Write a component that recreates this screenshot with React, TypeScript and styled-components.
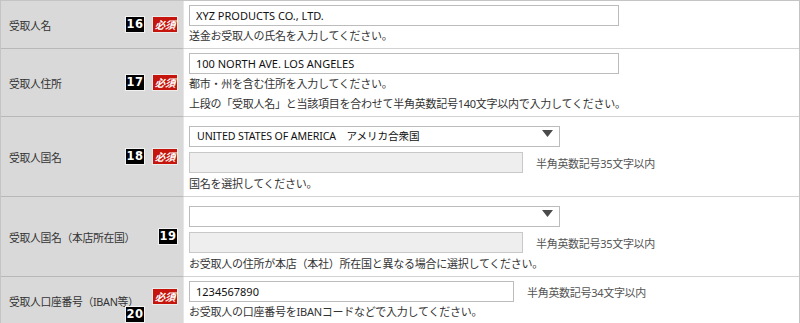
import React from "react";
import styled, { createGlobalStyle } from "styled-components";

const GlobalStyle = createGlobalStyle`
  html, body {
    margin: 0;
    padding: 0;
    background: #ffffff;
  }
  body {
    font-family: "Noto Sans", "Noto Sans CJK JP", sans-serif;
    color: #333333;
  }
`;

const font = `"Noto Sans", "Noto Sans CJK JP", sans-serif`;

const Table = styled.div`
  width: 800px;
  box-sizing: border-box;
  border: 1px solid #c4c4c4;
  border-bottom: none;
`;

const Row = styled.div`
  display: grid;
  grid-template-columns: 183px 1fr;
`;

const LabelCell = styled.div`
  display: flex;
  align-items: center;
  min-width: 0;
  background: #d9d9d9;
  border-bottom: 1px solid #b8b8b8;
  border-right: 1px solid #e6e6e6;
  padding: 0 5px 0 8px;
  font-size: 10.8px;
  color: #333333;
`;

const LabelText = styled.span`
  flex: 1;
  min-width: 0;
  white-space: nowrap;
  letter-spacing: -0.3px;
`;

const Badges = styled.div<{ $stacked?: boolean }>`
  flex: none;
  display: grid;
  grid-template-columns: 20px 26px;
  column-gap: 7px;
  row-gap: 1px;
  align-items: center;
  padding-top: ${(p) => (p.$stacked ? "10px" : "0")};
`;

const Num = styled.span<{ $col?: number; $row?: number }>`
  grid-column: ${(p) => p.$col ?? 1};
  grid-row: ${(p) => p.$row ?? 1};
  justify-self: end;
  box-sizing: border-box;
  width: 20px;
  height: 17px;
  background: #000000;
  border: 1px solid #f2f2f2;
  color: #ffffff;
  font-family: "DejaVu Sans", "Liberation Sans", sans-serif;
  font-weight: bold;
  font-size: 11.5px;
  letter-spacing: 0.5px;
  line-height: 15px;
  text-align: center;
`;

const Req = styled.span`
  grid-column: 2;
  grid-row: 1;
  box-sizing: border-box;
  width: 26px;
  height: 17px;
  background: #c5150c;
  border: 1px solid #ececec;
  color: #ffffff;
  font-family: "Noto Sans CJK JP", sans-serif;
  font-size: 10.5px;
  font-weight: bold;
  font-style: italic;
  line-height: 15px;
  text-align: center;
  letter-spacing: -0.3px;
`;

const ValueCell = styled.div`
  background: #ffffff;
  border-bottom: 1px solid #d2d2d2;
  padding: 4px 6px 2px 5px;
`;

const FieldLine = styled.div<{ $gap?: number; $top?: number }>`
  display: flex;
  align-items: center;
  margin-top: ${(p) => p.$top ?? 0}px;
  margin-bottom: ${(p) => p.$gap ?? 0}px;
`;

const TextInput = styled.input<{ $w: number }>`
  box-sizing: border-box;
  width: ${(p) => p.$w}px;
  height: 21px;
  margin: 0;
  padding: 0 6px;
  border: 1px solid #bcbcbc;
  border-radius: 0;
  background: #ffffff;
  font-family: ${font};
  font-size: 11px;
  color: #111111;
  outline: none;

  &:disabled {
    background: #eeeeee;
    border-color: #c8c8c8;
  }
`;

const SelectWrap = styled.div<{ $w: number }>`
  position: relative;
  width: ${(p) => p.$w}px;
  height: 21px;
`;

const Select = styled.select`
  box-sizing: border-box;
  width: 100%;
  height: 21px;
  margin: 0;
  padding: 0 24px 0 7px;
  border: 1px solid #bcbcbc;
  border-radius: 0;
  background: #ffffff;
  appearance: none;
  font-family: ${font};
  font-size: 10.6px;
  letter-spacing: -0.1px;
  color: #111111;
  outline: none;
`;

const Arrow = styled.svg`
  position: absolute;
  right: 7px;
  top: 7px;
  pointer-events: none;
`;

const Note = styled.span`
  margin-left: 13px;
  font-size: 11px;
  color: #555555;
  letter-spacing: -0.3px;
  white-space: nowrap;
`;

const Help = styled.div<{ $top?: number }>`
  margin-top: ${(p) => p.$top ?? 0}px;
  font-size: 11px;
  line-height: 20px;
  color: #333333;
  letter-spacing: -0.25px;
  white-space: nowrap;
`;

const CountrySelect = ({ value }: { value: string }) => (
  <SelectWrap $w={371}>
    <Select defaultValue={value}>
      <option value="">{""}</option>
      <option value="US">UNITED STATES OF AMERICA　アメリカ合衆国</option>
    </Select>
    <Arrow width="11" height="7" viewBox="0 0 11 7">
      <path d="M0 0 L11 0 L5.5 7 Z" fill="#4a4a4a" />
    </Arrow>
  </SelectWrap>
);

const App = () => {
  return (
    <>
      <GlobalStyle />
      <Table>
        <Row>
          <LabelCell>
            <LabelText>受取人名</LabelText>
            <Badges>
              <Num>16</Num>
              <Req>必須</Req>
            </Badges>
          </LabelCell>
          <ValueCell>
            <FieldLine>
              <TextInput $w={430} readOnly defaultValue="XYZ PRODUCTS CO., LTD." />
            </FieldLine>
            <Help>送金お受取人の氏名を入力してください。</Help>
          </ValueCell>
        </Row>

        <Row>
          <LabelCell>
            <LabelText>受取人住所</LabelText>
            <Badges>
              <Num>17</Num>
              <Req>必須</Req>
            </Badges>
          </LabelCell>
          <ValueCell>
            <FieldLine>
              <TextInput $w={430} readOnly defaultValue="100 NORTH AVE. LOS ANGELES" />
            </FieldLine>
            <Help>都市・州を含む住所を入力してください。</Help>
            <Help>上段の「受取人名」と当該項目を合わせて半角英数記号140文字以内で入力してください。</Help>
          </ValueCell>
        </Row>

        <Row>
          <LabelCell>
            <LabelText>受取人国名</LabelText>
            <Badges>
              <Num>18</Num>
              <Req>必須</Req>
            </Badges>
          </LabelCell>
          <ValueCell>
            <FieldLine $top={2} $gap={8}>
              <CountrySelect value="US" />
            </FieldLine>
            <FieldLine>
              <TextInput $w={334} disabled />
              <Note>半角英数記号35文字以内</Note>
            </FieldLine>
            <Help $top={1}>国名を選択してください。</Help>
          </ValueCell>
        </Row>

        <Row>
          <LabelCell>
            <LabelText>受取人国名（本店所在国）</LabelText>
            <Badges>
              <Num $col={2}>19</Num>
            </Badges>
          </LabelCell>
          <ValueCell>
            <FieldLine $top={2} $gap={8}>
              <CountrySelect value="" />
            </FieldLine>
            <FieldLine>
              <TextInput $w={334} disabled />
              <Note>半角英数記号35文字以内</Note>
            </FieldLine>
            <Help $top={1}>お受取人の住所が本店（本社）所在国と異なる場合に選択してください。</Help>
          </ValueCell>
        </Row>

        <Row>
          <LabelCell>
            <LabelText>受取人口座番号（IBAN等）</LabelText>
            <Badges $stacked>
              <Req>必須</Req>
              <Num $row={2}>20</Num>
            </Badges>
          </LabelCell>
          <ValueCell>
            <FieldLine>
              <TextInput $w={325} readOnly defaultValue="1234567890" />
              <Note>半角英数記号34文字以内</Note>
            </FieldLine>
            <Help>お受取人の口座番号をIBANコードなどで入力してください。</Help>
          </ValueCell>
        </Row>
      </Table>
    </>
  );
};

export default App;
